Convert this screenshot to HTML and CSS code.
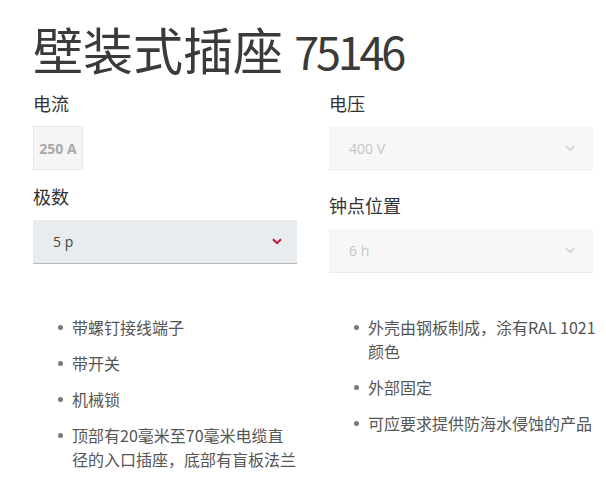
FILE: index.html
```html
<!DOCTYPE html>
<html lang="zh-CN">
<head>
<meta charset="utf-8">
<title>壁装式插座 75146</title>
<link rel="stylesheet" href="styles.css">
</head>
<body>
<main class="page">
  <h1 class="title">壁装式插座 <span class="num">75146</span></h1>
  <div class="options">
    <div class="col">
      <div class="field">
        <div class="label">电流</div>
        <div class="chip">250 A</div>
      </div>
      <div class="field field-poles">
        <div class="label">极数</div>
        <div class="select select-active">
          <span>5 p</span>
          <svg class="chev" width="10" height="7" viewBox="0 0 10 7"><path d="M1 1.2 L5 5.2 L9 1.2" fill="none" stroke="currentColor" stroke-width="2"/></svg>
        </div>
      </div>
    </div>
    <div class="col">
      <div class="field">
        <div class="label">电压</div>
        <div class="select select-disabled">
          <span>400 V</span>
          <svg class="chev" width="10" height="7" viewBox="0 0 10 7"><path d="M1 1.2 L5 5.2 L9 1.2" fill="none" stroke="currentColor" stroke-width="1.6"/></svg>
        </div>
      </div>
      <div class="field field-clock">
        <div class="label">钟点位置</div>
        <div class="select select-disabled">
          <span>6 h</span>
          <svg class="chev" width="10" height="7" viewBox="0 0 10 7"><path d="M1 1.2 L5 5.2 L9 1.2" fill="none" stroke="currentColor" stroke-width="1.6"/></svg>
        </div>
      </div>
    </div>
  </div>
  <div class="features">
    <ul class="list">
      <li>带螺钉接线端子</li>
      <li>带开关</li>
      <li>机械锁</li>
      <li>顶部有20毫米至70毫米电缆直径的入口插座，底部有盲板法兰</li>
    </ul>
    <ul class="list">
      <li>外壳由钢板制成，涂有RAL 1021颜色</li>
      <li>外部固定</li>
      <li>可应要求提供防海水侵蚀的产品</li>
    </ul>
  </div>
</main>
</body>
</html>
```
FILE: styles.css
```css
html, body {
  margin: 0;
  background: #ffffff;
}
body {
  font-family: "Noto Sans CJK SC", "Noto Sans", sans-serif;
  color: #333333;
}
.page {
  padding-left: 33px;
}
.title {
  margin: 0;
  padding-top: 17px;
  font-size: 50px;
  line-height: 62px;
  height: 62px;
  font-weight: 400;
  color: #3a3a3a;
  white-space: nowrap;
}
.num {
  font-size: 45px;
  line-height: 1;
  letter-spacing: -3.2px;
}
.options {
  display: grid;
  grid-template-columns: 264px 264px;
  column-gap: 32px;
  margin-top: 12px;
}
.col {
  display: flex;
  flex-direction: column;
}
.label {
  font-size: 18px;
  line-height: 24px;
  color: #333333;
}
.chip {
  margin-top: 11px;
  width: 50px;
  height: 44px;
  box-sizing: border-box;
  border: 1px solid #e6e6e6;
  background: #f5f5f5;
  display: flex;
  align-items: center;
  justify-content: center;
  font-family: "Open Sans", sans-serif;
  font-weight: 700;
  font-size: 14px;
  color: #a9a9a9;
  white-space: nowrap;
}
.field-poles {
  margin-top: 14px;
}
.field-clock {
  margin-top: 23px;
}
.select {
  margin-top: 12px;
  height: 44px;
  box-sizing: border-box;
  display: flex;
  align-items: center;
  justify-content: space-between;
  font-family: "Open Sans", sans-serif;
  font-size: 14px;
}
.select-active {
  background: #e9ecee;
  border-bottom: 1px solid #b8b8b8;
  padding: 0 15px 0 20px;
  color: #444444;
}
.select-active .chev {
  color: #c4113f;
}
.select-disabled {
  height: 43px;
  background: #f7f7f7;
  border-bottom: 1px solid #ebebeb;
  padding: 0 18px 0 20px;
  color: #c6c6c6;
}
.select-disabled .chev {
  color: #cccccc;
}
.field-clock .select-disabled {
  height: 44px;
}
.features {
  display: grid;
  grid-template-columns: 264px 1fr;
  column-gap: 32px;
  margin-top: 42px;
}
.list {
  list-style: none;
  margin: 0;
  padding: 0 0 0 39px;
}
.list li {
  position: relative;
  font-size: 16px;
  line-height: 24px;
  color: #555555;
  margin-bottom: 12px;
}
.list li::before {
  content: "";
  position: absolute;
  left: -14px;
  top: 10px;
  width: 5px;
  height: 5px;
  border-radius: 50%;
  background: #7a7a7a;
}
```
